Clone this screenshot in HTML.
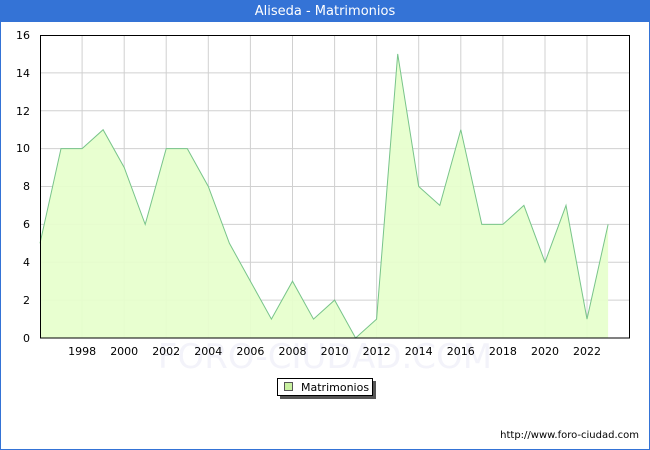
<!DOCTYPE html>
<html><head><meta charset="utf-8"><style>
body{margin:0;background:#fff;}
.wrap{position:relative;width:648px;height:448px;border:1px solid #3473d6;background:#fff;overflow:hidden;font-family:"DejaVu Sans","Liberation Sans",sans-serif;}
.title{position:absolute;left:0;top:0;width:648px;height:21px;background:#3473d6;color:#fff;font-size:13px;line-height:21px;text-align:center;}
</style></head><body><div class="wrap">
<div class="title">Aliseda - Matrimonios</div>
<svg width="650" height="450" style="position:absolute;left:-1px;top:-1px" font-family="DejaVu Sans, Liberation Sans, sans-serif">
<text x="325" y="368" font-size="34" fill="#f3f3fa" text-anchor="middle">FORO-CIUDAD.COM</text>
<g stroke="#d0d0d0" stroke-width="1">
<line x1="40" y1="300.1" x2="630" y2="300.1"/><line x1="40" y1="262.2" x2="630" y2="262.2"/><line x1="40" y1="224.4" x2="630" y2="224.4"/><line x1="40" y1="186.5" x2="630" y2="186.5"/><line x1="40" y1="148.6" x2="630" y2="148.6"/><line x1="40" y1="110.8" x2="630" y2="110.8"/><line x1="40" y1="72.9" x2="630" y2="72.9"/>
<line x1="82.1" y1="35" x2="82.1" y2="338"/><line x1="124.2" y1="35" x2="124.2" y2="338"/><line x1="166.2" y1="35" x2="166.2" y2="338"/><line x1="208.3" y1="35" x2="208.3" y2="338"/><line x1="250.4" y1="35" x2="250.4" y2="338"/><line x1="292.5" y1="35" x2="292.5" y2="338"/><line x1="334.6" y1="35" x2="334.6" y2="338"/><line x1="376.6" y1="35" x2="376.6" y2="338"/><line x1="418.7" y1="35" x2="418.7" y2="338"/><line x1="460.8" y1="35" x2="460.8" y2="338"/><line x1="502.9" y1="35" x2="502.9" y2="338"/><line x1="545" y1="35" x2="545" y2="338"/><line x1="587" y1="35" x2="587" y2="338"/>
</g>
<polygon fill="#e6ffcc" fill-opacity="0.92" points="40,338 40,243.3 61,148.6 82.1,148.6 103.1,129.7 124.2,167.5 145.2,224.4 166.2,148.6 187.3,148.6 208.3,186.5 229.4,243.3 250.4,281.2 271.4,319.1 292.5,281.2 313.5,319.1 334.6,300.1 355.6,338 376.6,319.1 397.7,53.9 418.7,186.5 439.8,205.4 460.8,129.7 481.8,224.4 502.9,224.4 523.9,205.4 545,262.2 566,205.4 587,319.1 608.1,224.4 608.1,338"/>
<polyline fill="none" stroke="#78c48a" stroke-width="1" points="40,243.3 61,148.6 82.1,148.6 103.1,129.7 124.2,167.5 145.2,224.4 166.2,148.6 187.3,148.6 208.3,186.5 229.4,243.3 250.4,281.2 271.4,319.1 292.5,281.2 313.5,319.1 334.6,300.1 355.6,338 376.6,319.1 397.7,53.9 418.7,186.5 439.8,205.4 460.8,129.7 481.8,224.4 502.9,224.4 523.9,205.4 545,262.2 566,205.4 587,319.1 608.1,224.4"/>
<rect x="40.5" y="35.5" width="589" height="302.5" fill="none" stroke="#000"/>
<g font-size="11" fill="#000" text-anchor="end">
<text x="30" y="342">0</text><text x="30" y="304">2</text><text x="30" y="266">4</text><text x="30" y="228">6</text><text x="30" y="190">8</text><text x="30" y="152">10</text><text x="30" y="115">12</text><text x="30" y="77">14</text><text x="30" y="39">16</text>
</g>
<g font-size="11" fill="#000" text-anchor="middle">
<text x="82.1" y="355">1998</text><text x="124.2" y="355">2000</text><text x="166.2" y="355">2002</text><text x="208.3" y="355">2004</text><text x="250.4" y="355">2006</text><text x="292.5" y="355">2008</text><text x="334.6" y="355">2010</text><text x="376.6" y="355">2012</text><text x="418.7" y="355">2014</text><text x="460.8" y="355">2016</text><text x="502.9" y="355">2018</text><text x="545" y="355">2020</text><text x="587" y="355">2022</text>
</g>
<rect x="280" y="381" width="96" height="18" fill="#555"/>
<rect x="277.5" y="378.5" width="95" height="17" fill="#fff" stroke="#000"/>
<rect x="284.5" y="382.5" width="8" height="8" fill="#c8f0a0" stroke="#555"/>
<text x="301" y="391" font-size="11" fill="#000">Matrimonios</text>
<text x="639" y="438" font-size="10" fill="#000" text-anchor="end">http://www.foro-ciudad.com</text>
</svg>
</div></body></html>
